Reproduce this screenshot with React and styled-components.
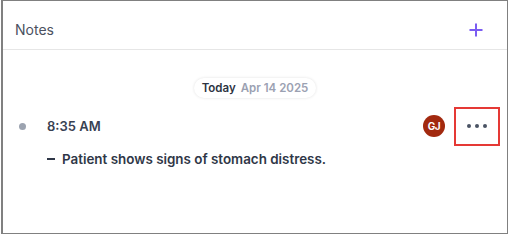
import React from "react";
import styled, { createGlobalStyle } from "styled-components";

const Global = createGlobalStyle`
  html, body { margin: 0; padding: 0; background: #fff; }
  body { font-family: Inter, "Noto Sans", sans-serif; }
  * { box-sizing: border-box; }
`;

const Frame = styled.div`
  margin-left: 1px;
  width: 507px;
  height: 234px;
  border: 1px solid #808080;
  border-left-width: 2px;
  background: #fff;
  display: flex;
  flex-direction: column;
`;

const Header = styled.div`
  height: 49px;
  border-bottom: 1px solid #e6e6e6;
  display: flex;
  align-items: center;
  justify-content: space-between;
  padding: 0 23px 0 12px;
`;

const Title = styled.div`
  font-size: 14px;
  color: #4b5160;
  margin-top: 8px;
`;

const AddButton = styled.button`
  border: none;
  background: none;
  padding: 0;
  width: 16px;
  height: 16px;
  margin-top: 9px;
  display: flex;
  cursor: pointer;
`;

const Body = styled.div`
  display: flex;
  flex-direction: column;
  padding: 28px 7px 0 7px;
`;

const DateRow = styled.div`
  display: flex;
  justify-content: center;
`;

const DatePill = styled.div`
  display: flex;
  gap: 5px;
  align-items: center;
  height: 20px;
  padding: 0 8px;
  border-radius: 10px;
  background: #fff;
  box-shadow: 0 0 3px rgba(0, 0, 0, 0.12);
  font-size: 11.5px;
  font-weight: 600;
`;

const DateToday = styled.span`
  color: #2d3342;
`;

const DateValue = styled.span`
  color: #9ba1b2;
`;

const EntryRow = styled.div`
  display: flex;
  align-items: center;
  margin-top: 8px;
  height: 40px;
  padding-left: 9px;
`;

const Dot = styled.span`
  width: 7px;
  height: 7px;
  border-radius: 50%;
  background: #9ca3b0;
  margin-right: 21px;
`;

const Time = styled.div`
  flex: 1;
  font-size: 13px;
  font-weight: 600;
  color: #384152;
`;

const Avatar = styled.div`
  width: 22px;
  height: 22px;
  border-radius: 50%;
  background: #a2290f;
  color: #fff;
  font-size: 10px;
  font-weight: 700;
  display: flex;
  align-items: center;
  justify-content: center;
  margin-right: 9px;
  letter-spacing: -0.3px;
`;

const MoreButton = styled.button`
  width: 46px;
  height: 39px;
  border: 2px solid #e53935;
  background: #fff;
  display: flex;
  align-items: center;
  justify-content: center;
  gap: 4px;
  padding: 0;
  cursor: pointer;
`;

const MoreDot = styled.span`
  width: 4px;
  height: 4px;
  border-radius: 50%;
  background: #4a5364;
`;

const NoteLine = styled.div`
  display: flex;
  align-items: center;
  gap: 7px;
  margin-top: 5px;
  padding-left: 37px;
  font-size: 13.4px;
  font-weight: 600;
  color: #2f3747;
`;

const Dash = styled.span`
  width: 8px;
  height: 2px;
  background: #2f3747;
`;

export default function App() {
  return (
    <>
      <Global />
      <Frame>
        <Header>
          <Title>Notes</Title>
          <AddButton aria-label="Add note">
            <svg width="16" height="16" viewBox="0 0 16 16">
              <path d="M8 1.5v13M1.5 8h13" stroke="#7b5cf2" strokeWidth="2" />
            </svg>
          </AddButton>
        </Header>
        <Body>
          <DateRow>
            <DatePill>
              <DateToday>Today</DateToday>
              <DateValue>Apr 14 2025</DateValue>
            </DatePill>
          </DateRow>
          <EntryRow>
            <Dot />
            <Time>8:35 AM</Time>
            <Avatar>GJ</Avatar>
            <MoreButton aria-label="More">
              <MoreDot />
              <MoreDot />
              <MoreDot />
            </MoreButton>
          </EntryRow>
          <NoteLine>
            <Dash />
            <span>Patient shows signs of stomach distress.</span>
          </NoteLine>
        </Body>
      </Frame>
    </>
  );
}
